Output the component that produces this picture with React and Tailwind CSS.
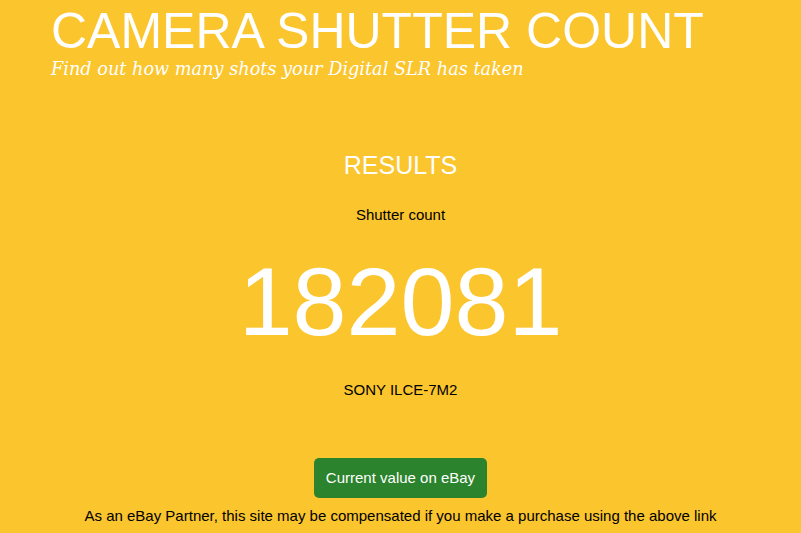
import React from 'react';

const App = () => {
  return (
    <div className="min-h-[533px] w-full bg-[#fbc52e] text-black font-['Liberation_Sans',Arial,sans-serif] overflow-hidden">
      {/* Header */}
      <header className="pl-[51px] pt-[5px]">
        <h1 className="text-white text-[50px] leading-[52px] font-normal">CAMERA SHUTTER COUNT</h1>
        <p className="text-white italic text-[17.7px] leading-[24px] font-['DejaVu_Serif',Georgia,serif]">
          Find out how many shots your Digital SLR has taken
        </p>
      </header>

      {/* Results */}
      <main className="flex flex-col items-center text-center pt-[69px]">
        <h2 className="text-white text-[25px] leading-[30px]">RESULTS</h2>
        <p className="mt-[26px] text-[15px] leading-[18px]">Shutter count</p>
        <div className="mt-[18px] text-white text-[97px] leading-[120px]">182081</div>
        <p className="mt-[19px] text-[15px] leading-[18px]">SONY ILCE-7M2</p>
        <a
          href="#"
          className="mt-[59px] inline-block rounded-[5px] bg-[#2b842d] px-[12px] py-[11px] text-white text-[15px] leading-[18px]"
        >
          Current value on eBay
        </a>
        <p className="mt-[9px] text-[15px] leading-[18px]">
          As an eBay Partner, this site may be compensated if you make a purchase using the above link
        </p>
      </main>
    </div>
  );
};

export default App;
